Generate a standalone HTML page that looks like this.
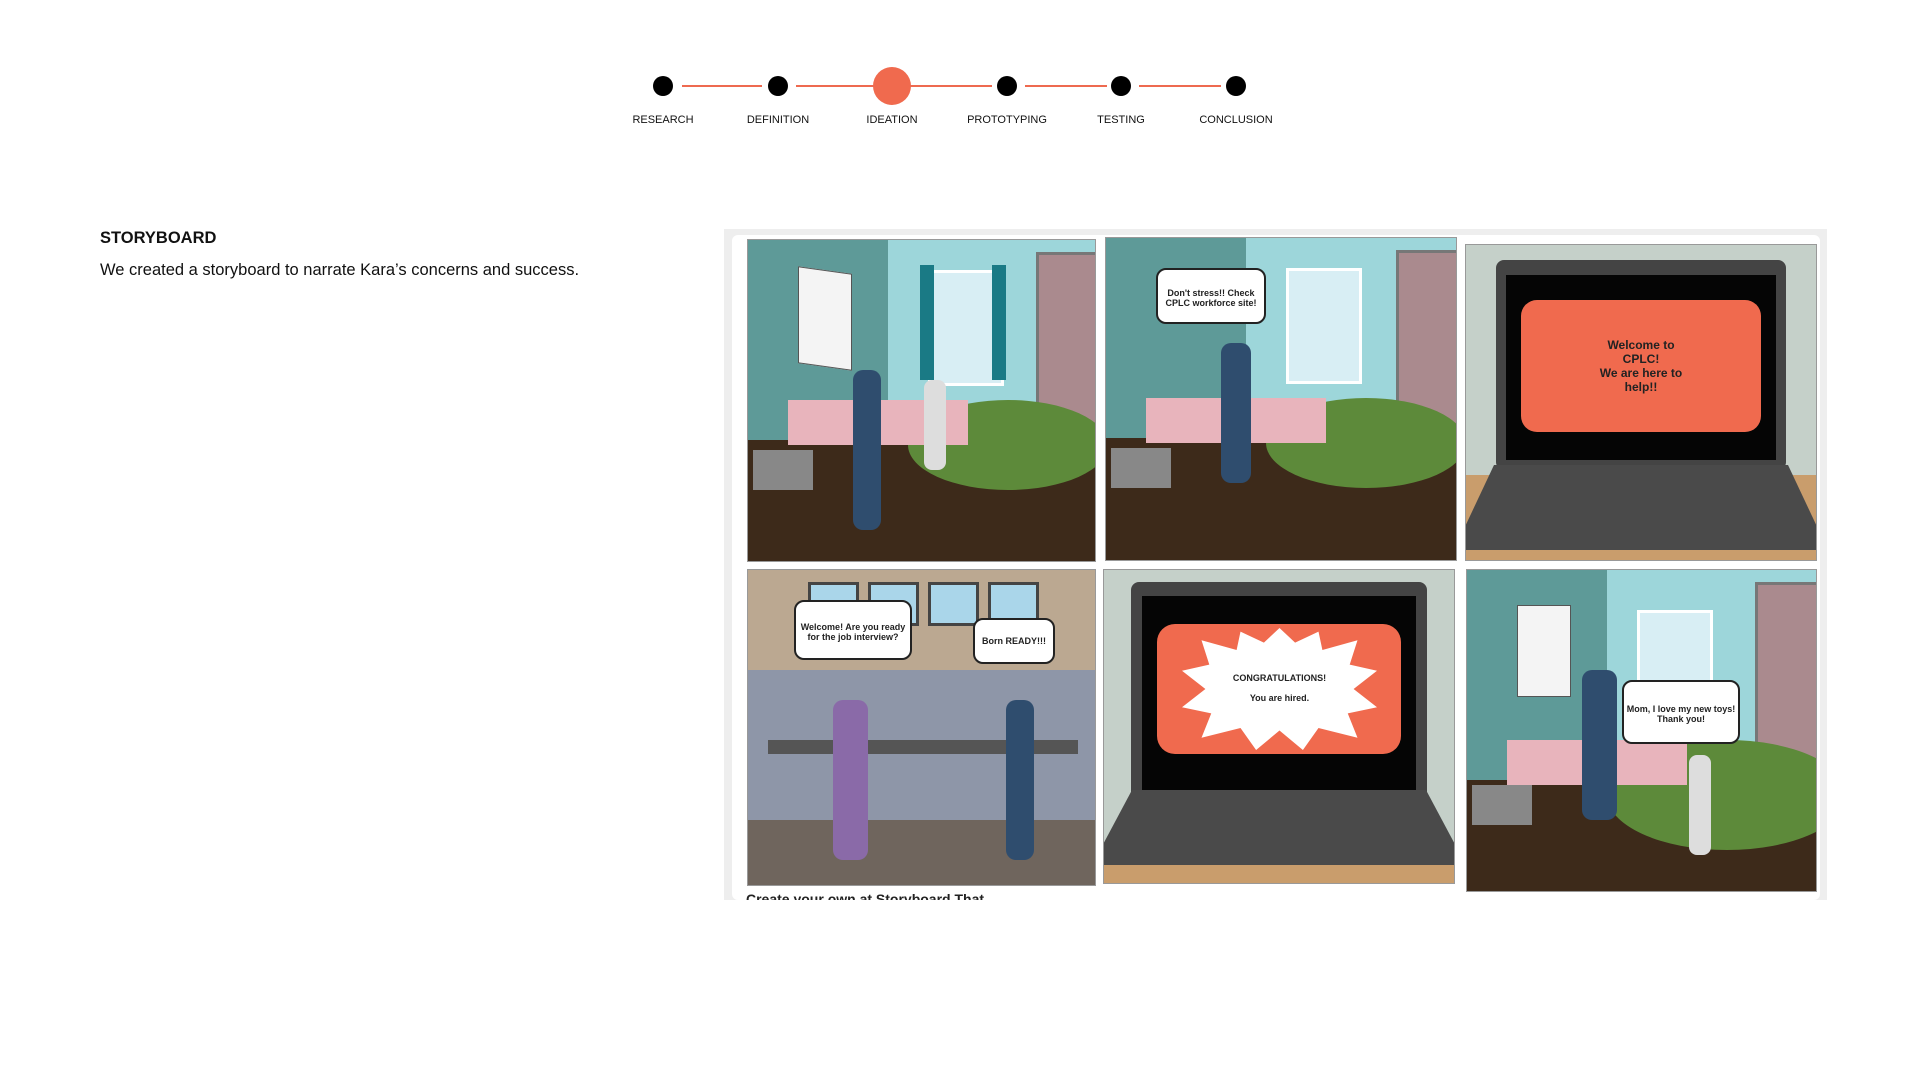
<!DOCTYPE html>
<html><head><meta charset="utf-8"><style>
body{margin:0;width:1920px;height:1080px;background:#fff;font-family:"Liberation Sans",sans-serif;position:relative;overflow:hidden}
.a{position:absolute}
.dot{position:absolute;width:20px;height:20px;border-radius:50%;background:#000;top:76px}
.ln{position:absolute;height:2px;background:#ee6a50;top:85px}
.lb{position:absolute;top:114px;font-size:11px;color:#111;width:120px;text-align:center}
.p{position:absolute;overflow:hidden;border:1px solid #999}
.bubble{position:absolute;background:#fff;border:2px solid #222;border-radius:10px;font-size:9px;font-weight:bold;text-align:center;color:#222;font-family:"Liberation Sans Narrow","Liberation Sans",sans-serif}
</style></head><body>
<!-- timeline -->
<div class="ln" style="left:682px;width:80px"></div>
<div class="ln" style="left:796px;width:80px"></div>
<div class="ln" style="left:910px;width:82px"></div>
<div class="ln" style="left:1025px;width:82px"></div>
<div class="ln" style="left:1139px;width:82px"></div>
<div class="dot" style="left:653px"></div>
<div class="dot" style="left:768px"></div>
<div class="a" style="left:873px;top:67px;width:38px;height:38px;border-radius:50%;background:#f06a4e"></div>
<div class="dot" style="left:997px"></div>
<div class="dot" style="left:1111px"></div>
<div class="dot" style="left:1226px"></div>
<div class="lb" style="left:603px">RESEARCH</div>
<div class="lb" style="left:718px">DEFINITION</div>
<div class="lb" style="left:832px">IDEATION</div>
<div class="lb" style="left:947px">PROTOTYPING</div>
<div class="lb" style="left:1061px">TESTING</div>
<div class="lb" style="left:1176px">CONCLUSION</div>

<div class="a" style="left:100px;top:229px;font-size:16.5px;font-weight:bold;color:#111">STORYBOARD</div>
<div class="a" style="left:100px;top:261px;font-size:16.5px;color:#111">We created a storyboard to narrate Kara’s concerns and success.</div>

<!-- frame -->
<div class="a" style="left:724px;top:229px;width:1103px;height:671px;background:#eee"></div>
<div class="a" style="left:732px;top:235px;width:1088px;height:665px;background:#fff;border-radius:6px"></div>

<!-- panel 1 bedroom -->
<div class="p" style="left:747px;top:239px;width:347px;height:321px;background:#9dd6da">
 <div class="a" style="left:0;top:0;width:140px;height:230px;background:#5e9a98"></div>
 <div class="a" style="left:50px;top:30px;width:52px;height:95px;background:#f4f4f4;border:1px solid #555;transform:skewY(8deg)"></div>
 <div class="a" style="left:180px;top:30px;width:70px;height:110px;background:#d8eef4;border:3px solid #fff"></div>
 <div class="a" style="left:172px;top:25px;width:14px;height:115px;background:#1a7a85"></div>
 <div class="a" style="left:244px;top:25px;width:14px;height:115px;background:#1a7a85"></div>
 <div class="a" style="left:288px;top:12px;width:60px;height:190px;background:#aa8a8e;border:3px solid #777"></div>
 <div class="a" style="left:0;top:200px;width:351px;height:125px;background:#3d2a1a"></div>
 <div class="a" style="left:160px;top:160px;width:200px;height:90px;border-radius:50%;background:#5d8a3a"></div>
 <div class="a" style="left:40px;top:160px;width:180px;height:45px;background:#e8b4bc"></div>
 <div class="a" style="left:5px;top:210px;width:60px;height:40px;background:#888"></div>
 <div class="a" style="left:105px;top:130px;width:28px;height:160px;background:#2f4d6e;border-radius:10px"></div>
 <div class="a" style="left:176px;top:140px;width:22px;height:90px;background:#ddd;border-radius:8px"></div>
</div>
<!-- panel 2 -->
<div class="p" style="left:1105px;top:237px;width:350px;height:322px;background:#9dd6da">
 <div class="a" style="left:0;top:0;width:140px;height:230px;background:#5e9a98"></div>
 <div class="a" style="left:180px;top:30px;width:70px;height:110px;background:#d8eef4;border:3px solid #fff"></div>
 <div class="a" style="left:290px;top:12px;width:60px;height:190px;background:#aa8a8e;border:3px solid #777"></div>
 <div class="a" style="left:0;top:200px;width:355px;height:125px;background:#3d2a1a"></div>
 <div class="a" style="left:160px;top:160px;width:200px;height:90px;border-radius:50%;background:#5d8a3a"></div>
 <div class="a" style="left:40px;top:160px;width:180px;height:45px;background:#e8b4bc"></div>
 <div class="a" style="left:5px;top:210px;width:60px;height:40px;background:#888"></div>
 <div class="a" style="left:115px;top:105px;width:30px;height:140px;background:#2f4d6e;border-radius:10px"></div>
 <div class="bubble" style="left:50px;top:30px;width:110px;height:56px;padding-top:18px;box-sizing:border-box">Don't stress!! Check CPLC workforce site!</div>
</div>
<!-- panel 3 laptop -->
<div class="p" style="left:1465px;top:244px;width:350px;height:315px;background:#c5d0c9">
 <div class="a" style="left:0;top:230px;width:355px;height:88px;background:#c99d6c"></div>
 <div class="a" style="left:30px;top:15px;width:290px;height:210px;background:#444;border-radius:8px"></div>
 <div class="a" style="left:40px;top:30px;width:270px;height:185px;background:#050505"></div>
 <div class="a" style="left:55px;top:55px;width:240px;height:132px;background:#f06a4e;border-radius:16px;color:#222;font-weight:bold;font-size:12px;text-align:center;padding-top:38px;box-sizing:border-box;line-height:14px">Welcome to<br>CPLC!<br>We are here to<br>help!!</div>
 <div class="a" style="left:0;top:220px;width:350px;height:85px;background:#4a4a4a;clip-path:polygon(8% 0,92% 0,100% 70%,100% 100%,0 100%,0 70%)"></div>
</div>
<!-- panel 4 office -->
<div class="p" style="left:747px;top:569px;width:347px;height:315px;background:#8e96a8">
 <div class="a" style="left:0;top:0;width:351px;height:100px;background:#bba891"></div>
 <div class="a" style="left:60px;top:12px;width:45px;height:38px;background:#aad6ea;border:3px solid #444"></div>
 <div class="a" style="left:120px;top:12px;width:45px;height:38px;background:#aad6ea;border:3px solid #444"></div>
 <div class="a" style="left:180px;top:12px;width:45px;height:38px;background:#aad6ea;border:3px solid #444"></div>
 <div class="a" style="left:240px;top:12px;width:45px;height:38px;background:#aad6ea;border:3px solid #444"></div>
 <div class="a" style="left:0;top:250px;width:351px;height:68px;background:#6f655d"></div>
 <div class="a" style="left:20px;top:170px;width:310px;height:14px;background:#555"></div>
 <div class="a" style="left:85px;top:130px;width:35px;height:160px;background:#8a6aa8;border-radius:10px"></div>
 <div class="a" style="left:258px;top:130px;width:28px;height:160px;background:#2f4d6e;border-radius:10px"></div>
 <div class="bubble" style="left:46px;top:30px;width:118px;height:60px;padding-top:20px;box-sizing:border-box">Welcome! Are you ready for the job interview?</div>
 <div class="bubble" style="left:225px;top:48px;width:82px;height:46px;padding-top:16px;box-sizing:border-box">Born READY!!!</div>
</div>
<!-- panel 5 laptop -->
<div class="p" style="left:1103px;top:569px;width:350px;height:313px;background:#c5d0c9">
 <div class="a" style="left:0;top:290px;width:354px;height:24px;background:#c99d6c"></div>
 <div class="a" style="left:27px;top:12px;width:296px;height:222px;background:#444;border-radius:8px"></div>
 <div class="a" style="left:38px;top:26px;width:274px;height:198px;background:#050505"></div>
 <div class="a" style="left:53px;top:54px;width:244px;height:130px;background:#f06a4e;border-radius:18px"></div>
 <div class="a" style="left:78px;top:58px;width:195px;height:122px;background:#fff;clip-path:polygon(50% 0,58% 12%,70% 3%,72% 18%,90% 10%,86% 30%,100% 35%,88% 50%,100% 65%,85% 70%,90% 90%,70% 82%,62% 100%,50% 84%,38% 100%,30% 82%,10% 90%,15% 70%,0 65%,12% 50%,0 35%,14% 30%,10% 10%,28% 18%,30% 3%,42% 12%);font-size:9px;font-weight:bold;text-align:center;padding-top:40px;box-sizing:border-box;line-height:20px;color:#222">CONGRATULATIONS!<br>You are hired.</div>
 <div class="a" style="left:0;top:220px;width:350px;height:75px;background:#4a4a4a;clip-path:polygon(8% 0,92% 0,100% 70%,100% 100%,0 100%,0 70%)"></div>
</div>
<!-- panel 6 -->
<div class="p" style="left:1466px;top:569px;width:349px;height:321px;background:#9dd6da">
 <div class="a" style="left:0;top:0;width:140px;height:230px;background:#5e9a98"></div>
 <div class="a" style="left:50px;top:35px;width:52px;height:90px;background:#f4f4f4;border:1px solid #555"></div>
 <div class="a" style="left:170px;top:40px;width:70px;height:110px;background:#d8eef4;border:3px solid #fff"></div>
 <div class="a" style="left:288px;top:12px;width:60px;height:190px;background:#aa8a8e;border:3px solid #777"></div>
 <div class="a" style="left:0;top:210px;width:353px;height:114px;background:#3d2a1a"></div>
 <div class="a" style="left:140px;top:170px;width:240px;height:110px;border-radius:50%;background:#5d8a3a"></div>
 <div class="a" style="left:40px;top:170px;width:180px;height:45px;background:#e8b4bc"></div>
 <div class="a" style="left:5px;top:215px;width:60px;height:40px;background:#888"></div>
 <div class="a" style="left:115px;top:100px;width:35px;height:150px;background:#2f4d6e;border-radius:10px"></div>
 <div class="a" style="left:222px;top:185px;width:22px;height:100px;background:#ddd;border-radius:8px"></div>
 <div class="bubble" style="left:155px;top:110px;width:118px;height:64px;padding-top:22px;box-sizing:border-box">Mom, I love my new toys! Thank you!</div>
</div>
<div class="a" style="left:746px;top:893px;width:300px;height:7px;overflow:hidden"><div style="font-size:14px;font-weight:bold;color:#222;margin-top:-2px">Create your own at Storyboard That</div></div>
</body></html>
